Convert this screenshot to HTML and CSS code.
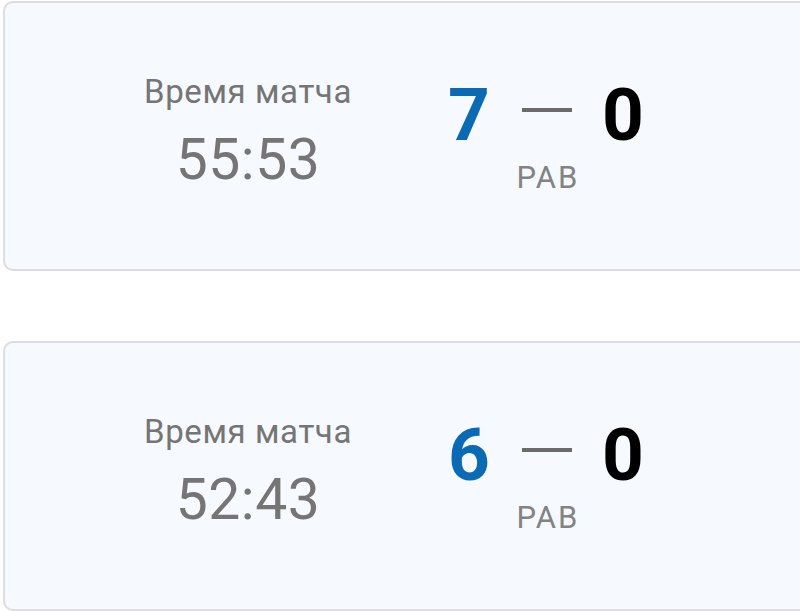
FILE: index.html
```html
<!DOCTYPE html>
<html lang="ru">
<head>
<meta charset="utf-8">
<link rel="stylesheet" href="styles.css">
</head>
<body>
<div class="list">
  <div class="card">
    <div class="time">
      <div class="time-label">Время матча</div>
      <div class="time-value">55:53</div>
    </div>
    <div class="score">
      <div class="goal home">7</div>
      <div class="mid">
        <div class="dash"></div>
        <div class="period">РАВ</div>
      </div>
      <div class="goal away">0</div>
    </div>
  </div>
  <div class="card">
    <div class="time">
      <div class="time-label">Время матча</div>
      <div class="time-value">52:43</div>
    </div>
    <div class="score">
      <div class="goal home">6</div>
      <div class="mid">
        <div class="dash"></div>
        <div class="period">РАВ</div>
      </div>
      <div class="goal away">0</div>
    </div>
  </div>
</div>
</body>
</html>
```
FILE: styles.css
```css
html, body {
  margin: 0;
  padding: 0;
  background: #ffffff;
  overflow: hidden;
  height: 611px;
}
body {
  font-family: Roboto, "Noto Sans", sans-serif;
}
.list {
  display: flex;
  flex-direction: column;
  gap: 70px;
  padding: 1px 0 0 3px;
  width: 1100px;
}
.card {
  box-sizing: border-box;
  height: 270px;
  border: 2px solid #dcdde0;
  border-radius: 10px;
  background: #f6f9fd;
  display: flex;
  align-items: flex-start;
}
.time {
  width: 230px;
  margin-left: 128px;
  margin-top: 69px;
  text-align: center;
  color: #757575;
}
.time-label {
  font-size: 33px;
  line-height: 40px;
  letter-spacing: 0.6px;
}
.time-value {
  font-size: 57px;
  line-height: 64px;
  letter-spacing: 0.5px;
  margin-top: 16px;
}
.score {
  display: flex;
  align-items: flex-start;
  margin-left: 85px;
  margin-top: 70px;
}
.goal {
  font-size: 73px;
  font-weight: 700;
  line-height: 84px;
}
.home {
  color: #0b6ab4;
}
.away {
  color: #000000;
}
.mid {
  display: flex;
  flex-direction: column;
  align-items: center;
  width: 60px;
  margin: 0 25px 0 27px;
}
.dash {
  width: 50px;
  height: 4px;
  background: #6b6b6b;
  margin-top: 35px;
}
.period {
  font-size: 31px;
  line-height: 36px;
  letter-spacing: 2px;
  margin-right: -2px;
  color: #838383;
  margin-top: 48px;
}
```
